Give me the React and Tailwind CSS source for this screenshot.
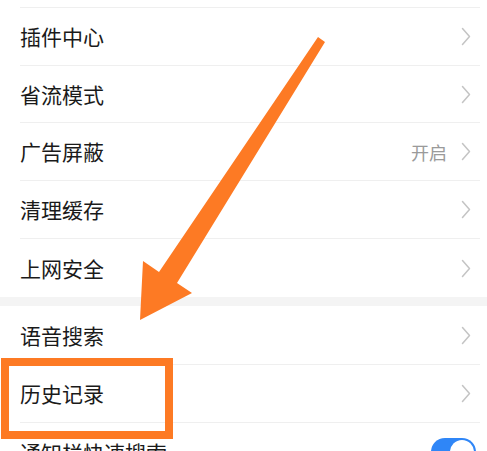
import React from "react";

const Chevron = () => (
  <svg width="10" height="19" viewBox="0 0 10 19" className="shrink-0">
    <path d="M1.5 1.5 L8.5 9.5 L1.5 17.5" fill="none" stroke="#c4c4c4" strokeWidth="1.5" strokeLinecap="round" strokeLinejoin="round" />
  </svg>
);

function Row({ label, h, value, border = true, right }) {
  return (
    <div
      className={`ml-[20px] mr-[7px] flex items-center justify-between pr-[9px] ${border ? "border-b border-[#efefef]" : ""}`}
      style={{ height: h }}
    >
      <span className="text-[21px] text-[#1a1a1a] leading-none">{label}</span>
      {right ? (
        right
      ) : (
        <div className="flex items-center gap-[14px]">
          {value && <span className="text-[18px] text-[#9a9a9a] leading-none">{value}</span>}
          <Chevron />
        </div>
      )}
    </div>
  );
}

export default function App() {
  return (
    <div
      className="relative w-[487px] h-[451px] overflow-hidden bg-white"
      style={{ fontFamily: '"Noto Sans CJK SC", "Noto Sans", sans-serif' }}
    >
      <div className="h-[7px]" />
      <div className="ml-[20px] mr-[7px] h-px bg-[#efefef]" />
      <Row label="插件中心" h={58} />
      <Row label="省流模式" h={57} />
      <Row label="广告屏蔽" h={58} value="开启" />
      <Row label="清理缓存" h={58} />
      <Row label="上网安全" h={58} border={false} />
      <div className="h-[9px] bg-[#f4f4f4]" />
      <Row label="语音搜索" h={59} />
      <Row label="历史记录" h={58} />
      <Row
        label="通知栏快速搜索"
        h={58}
        border={false}
        right={
          <div className="relative w-[45px] h-[28px] rounded-full bg-[#2f86f7] mr-[-5px]">
            <div className="absolute right-[2px] top-[2px] w-[24px] h-[24px] rounded-full bg-white" />
          </div>
        }
      />

      {/* annotation overlay */}
      <div className="absolute left-[1px] top-[358px] w-[172px] h-[81px] border-[8px] border-[#fd7a24]" />
      <svg className="absolute left-0 top-0" width="487" height="451" viewBox="0 0 487 451">
        <polygon
          points="318,37 325,42 177,283 192,293 140,320 143,261 159,272"
          fill="#fd7a24"
        />
      </svg>
    </div>
  );
}
